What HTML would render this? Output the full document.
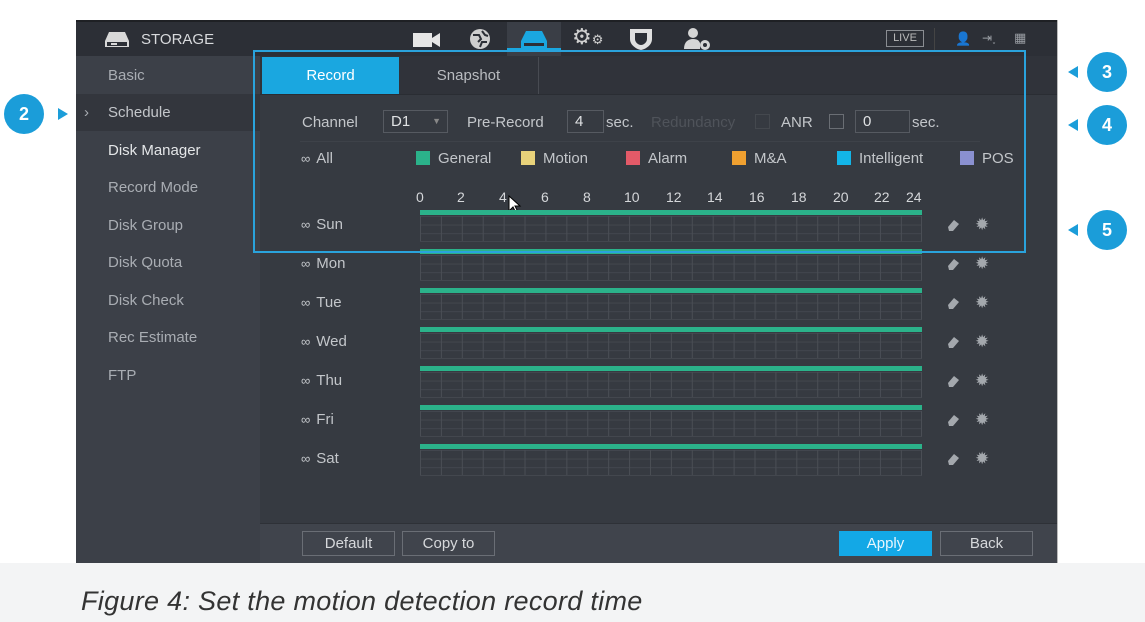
<!DOCTYPE html>
<html><head><meta charset="utf-8"><style>
*{margin:0;padding:0;box-sizing:border-box}
body{width:1145px;height:622px;background:#fff;position:relative;overflow:hidden;font-family:"Liberation Sans","DejaVu Sans",sans-serif}
.abs{position:absolute}
.screen{left:76px;top:20px;width:982px;height:543px;background:#363a41}
.top{left:76px;top:20px;width:982px;height:36px;background:#2c2f36;border-top:2px solid #1e2024}
.side{left:76px;top:56px;width:184px;height:507px;background:#3c4048}
.si{position:absolute;left:108px;font-size:15px;color:#a9adb3}
.t{color:#c3c6ca;font-size:15px}
.grid{position:absolute;left:420px;width:502px;height:26px;
background-image:linear-gradient(90deg,#4a4e55 1px,transparent 1px),linear-gradient(180deg,#43474e 1px,transparent 1px);
background-size:20.92px 100%,100% 8.6px;border-right:1px solid #4a4e55;border-bottom:1px solid #43474e}
.bar{position:absolute;left:420px;width:502px;height:5px;background:#2bb28a}
.lbl{position:absolute;left:301px;font-size:15px;color:#c3c6ca}
.lbl span{font-size:13px;margin-right:6px}
.btn{position:absolute;top:531px;height:25px;border:1px solid #6a6e75;color:#d6d8db;font-size:15px;text-align:center;line-height:23px}
.sw{display:inline-block;width:14px;height:14px;vertical-align:-2px;margin-right:8px}
.circ{position:absolute;width:40px;height:40px;border-radius:50%;background:#1b9dd9;color:#fff;font-weight:bold;font-size:18px;text-align:center;line-height:40px}
.tri{position:absolute;width:0;height:0;border-top:6px solid transparent;border-bottom:6px solid transparent;border-right:10px solid #1b9dd9}
.ic{position:absolute;color:#9a9ea4;font-size:15px}
</style></head><body>
<div class="abs screen"></div>
<div class="abs top"></div>
<div class="abs" style="left:507px;top:22px;width:54px;height:34px;background:#3a3e46"></div>
<div class="abs side"></div>
<div class="abs" style="left:76px;top:94px;width:184px;height:37px;background:#33363d"></div>
<svg class="abs" style="left:105px;top:30px" width="24" height="18"><path d="M4 2h16l4 9v6H0v-6z" fill="#d8d8d8"/><rect x="2" y="12" width="20" height="4" fill="#2c2f36"/><rect x="6" y="13" width="6" height="2" fill="#d8d8d8"/></svg>
<div class="abs t" style="left:141px;top:31px;color:#d8dadd">STORAGE</div>
<svg class="abs" style="left:413px;top:32px" width="28" height="16"><rect x="0" y="1" width="19" height="14" fill="#e6e6e6"/><path d="M19 6l8-5v14l-8-5z" fill="#e6e6e6"/></svg>
<svg class="abs" style="left:468px;top:27px" width="24" height="24"><circle cx="12" cy="12" r="10" fill="#cfcfcf"/><path d="M5 8h6l2 4-3 3M14 4l3 4 3 1M12 20l2-5h5" stroke="#2c2f36" stroke-width="2" fill="none"/></svg>
<svg class="abs" style="left:520px;top:30px" width="28" height="22"><path d="M6 1h16l5 10v8H1v-8z" fill="#1aa7e0"/><rect x="4" y="13" width="20" height="3" fill="#2c2f36"/></svg>
<div class="abs" style="left:507px;top:48px;width:54px;height:3px;background:#1aa7e0"></div>
<div class="abs" style="left:572px;top:24px;font-size:22px;color:#d0d0d0">⚙<span style="font-size:13px">⚙</span></div>
<svg class="abs" style="left:628px;top:27px" width="26" height="24"><path d="M2 2h22v10c0 6-6 10-11 11C8 22 2 18 2 12z" fill="#e0e0e0"/><path d="M7 6h12v6c0 3-3 6-6 6s-6-3-6-6z" fill="#2c2f36"/></svg>
<svg class="abs" style="left:682px;top:27px" width="30" height="24"><circle cx="11" cy="6" r="5" fill="#d6d6d6"/><path d="M2 22c0-7 4-10 9-10s6 2 7 4v6z" fill="#d6d6d6"/><circle cx="23" cy="18" r="5" fill="#d6d6d6"/><circle cx="23" cy="18" r="2" fill="#2c2f36"/></svg>
<div class="abs" style="left:886px;top:30px;width:38px;height:17px;border:1px solid #8a8d92;color:#bbb;font-size:11px;text-align:center;line-height:15px">LIVE</div>
<div class="abs" style="left:934px;top:28px;width:1px;height:22px;background:#444"></div>
<div class="ic" style="left:955px;top:31px;font-size:13px">👤</div>
<div class="ic" style="left:982px;top:31px;font-size:12px">⇥˯</div>
<div class="ic" style="left:1014px;top:30px;font-size:13px">▦</div>
<div class="si" style="top:67px">Basic</div>
<div class="si" style="top:104px;left:84px">›</div>
<div class="si" style="top:104px;color:#c3c6ca">Schedule</div>
<div class="si" style="top:142px;color:#e4e6e8">Disk Manager</div>
<div class="si" style="top:179px">Record Mode</div>
<div class="si" style="top:217px">Disk Group</div>
<div class="si" style="top:254px">Disk Quota</div>
<div class="si" style="top:292px">Disk Check</div>
<div class="si" style="top:329px">Rec Estimate</div>
<div class="si" style="top:367px">FTP</div>
<div class="abs" style="left:260px;top:56px;width:798px;height:39px;background:#30333a;border-bottom:1px solid #2a2d33"></div>
<div class="abs" style="left:262px;top:57px;width:137px;height:37px;background:#1aa7e0;color:#fff;font-size:15px;text-align:center;line-height:37px">Record</div>
<div class="abs" style="left:399px;top:57px;width:140px;height:37px;border-right:1px solid #484b52;color:#b9bcc0;font-size:15px;text-align:center;line-height:37px">Snapshot</div>
<div class="abs t" style="left:302px;top:114px">Channel</div>
<div class="abs" style="left:383px;top:110px;width:65px;height:23px;border:1px solid #565a61;color:#e0e2e4;font-size:15px;padding-left:7px;line-height:21px">D1<span style="position:absolute;right:6px;font-size:9px;color:#888">▼</span></div>
<div class="abs t" style="left:467px;top:114px">Pre-Record</div>
<div class="abs" style="left:567px;top:110px;width:37px;height:23px;border:1px solid #565a61;color:#e0e2e4;font-size:15px;padding-left:7px;line-height:21px">4</div>
<div class="abs t" style="left:606px;top:114px">sec.</div>
<div class="abs" style="left:651px;top:114px;color:#4f535a;font-size:15px">Redundancy</div>
<div class="abs" style="left:755px;top:114px;width:15px;height:15px;border:1px solid #44484e"></div>
<div class="abs t" style="left:781px;top:114px">ANR</div>
<div class="abs" style="left:829px;top:114px;width:15px;height:15px;border:1px solid #6a6e74"></div>
<div class="abs" style="left:855px;top:110px;width:55px;height:23px;border:1px solid #565a61;color:#e0e2e4;font-size:15px;padding-left:7px;line-height:21px">0</div>
<div class="abs t" style="left:912px;top:114px">sec.</div>
<div class="abs" style="left:300px;top:141px;width:680px;height:1px;background:#3e4249"></div>
<div class="lbl" style="top:150px"><span>∞</span>All</div>
<div class="abs t" style="left:416px;top:150px"><i class="sw" style="background:#2bb28a"></i>General</div>
<div class="abs t" style="left:521px;top:150px"><i class="sw" style="background:#e8d27a"></i>Motion</div>
<div class="abs t" style="left:626px;top:150px"><i class="sw" style="background:#e35a68"></i>Alarm</div>
<div class="abs t" style="left:732px;top:150px"><i class="sw" style="background:#f0a030"></i>M&amp;A</div>
<div class="abs t" style="left:837px;top:150px"><i class="sw" style="background:#13b5e8"></i>Intelligent</div>
<div class="abs t" style="left:960px;top:150px"><i class="sw" style="background:#8a90d0"></i>POS</div>
<div class="abs" style="left:0;top:189px;font-size:14px;color:#d5d7da">
<span class="abs" style="left:416px">0</span><span class="abs" style="left:457px">2</span><span class="abs" style="left:499px">4</span><span class="abs" style="left:541px">6</span><span class="abs" style="left:583px">8</span><span class="abs" style="left:624px">10</span><span class="abs" style="left:666px">12</span><span class="abs" style="left:707px">14</span><span class="abs" style="left:749px">16</span><span class="abs" style="left:791px">18</span><span class="abs" style="left:833px">20</span><span class="abs" style="left:874px">22</span><span class="abs" style="left:906px">24</span>
</div>
<svg class="abs" style="left:508px;top:195px" width="14" height="20"><path d="M1 1v15l4-4 3 6 2-1-3-6h5z" fill="#fff" stroke="#000"/></svg>
<div id="days"></div>
<script>
var d=["Sun","Mon","Tue","Wed","Thu","Fri","Sat"],h="";
for(var i=0;i<7;i++){var y=210+39*i;
h+='<div class="bar" style="top:'+y+'px"></div><div class="grid" style="top:'+(y+6)+'px"></div>';
h+='<div class="lbl" style="top:'+(y+6)+'px"><span>∞</span>'+d[i]+'</div>';
h+='<svg class="abs" style="left:946px;top:'+(y+9)+'px" width="14" height="12"><path d="M2 8l6-7 5 4-6 7H3z" fill="#a4a8ad"/></svg>';
h+='<div class="ic" style="left:975px;top:'+(y+5)+'px;font-size:17px;color:#a4a8ad">✹</div>';}
document.getElementById("days").innerHTML=h;
</script>
<div class="abs" style="left:260px;top:523px;width:798px;height:40px;background:#40444c;border-top:1px solid #2e3137"></div>
<div class="btn" style="left:302px;width:93px">Default</div>
<div class="btn" style="left:402px;width:93px">Copy to</div>
<div class="btn" style="left:839px;width:93px;background:#13a8e6;border-color:#13a8e6;color:#e8f6fd">Apply</div>
<div class="btn" style="left:940px;width:93px">Back</div>
<div class="abs" style="left:1057px;top:20px;width:1px;height:543px;background:#bbb"></div>
<div class="abs" style="left:0;top:563px;width:1145px;height:59px;background:#f3f4f5"></div>
<div class="abs" style="left:253px;top:50px;width:773px;height:203px;border:2px solid #2aa3dc"></div>
<div class="circ" style="left:4px;top:94px">2</div>
<div class="abs" style="left:58px;top:108px;width:0;height:0;border-top:6px solid transparent;border-bottom:6px solid transparent;border-left:10px solid #1b9dd9"></div>
<div class="tri" style="left:1068px;top:66px"></div><div class="circ" style="left:1087px;top:52px">3</div>
<div class="tri" style="left:1068px;top:119px"></div><div class="circ" style="left:1087px;top:105px">4</div>
<div class="tri" style="left:1068px;top:224px"></div><div class="circ" style="left:1087px;top:210px">5</div>
<div class="abs" style="left:81px;top:586px;font-size:27px;font-style:italic;color:#333;letter-spacing:0.3px">Figure 4: Set the motion detection record time</div>
</body></html>
